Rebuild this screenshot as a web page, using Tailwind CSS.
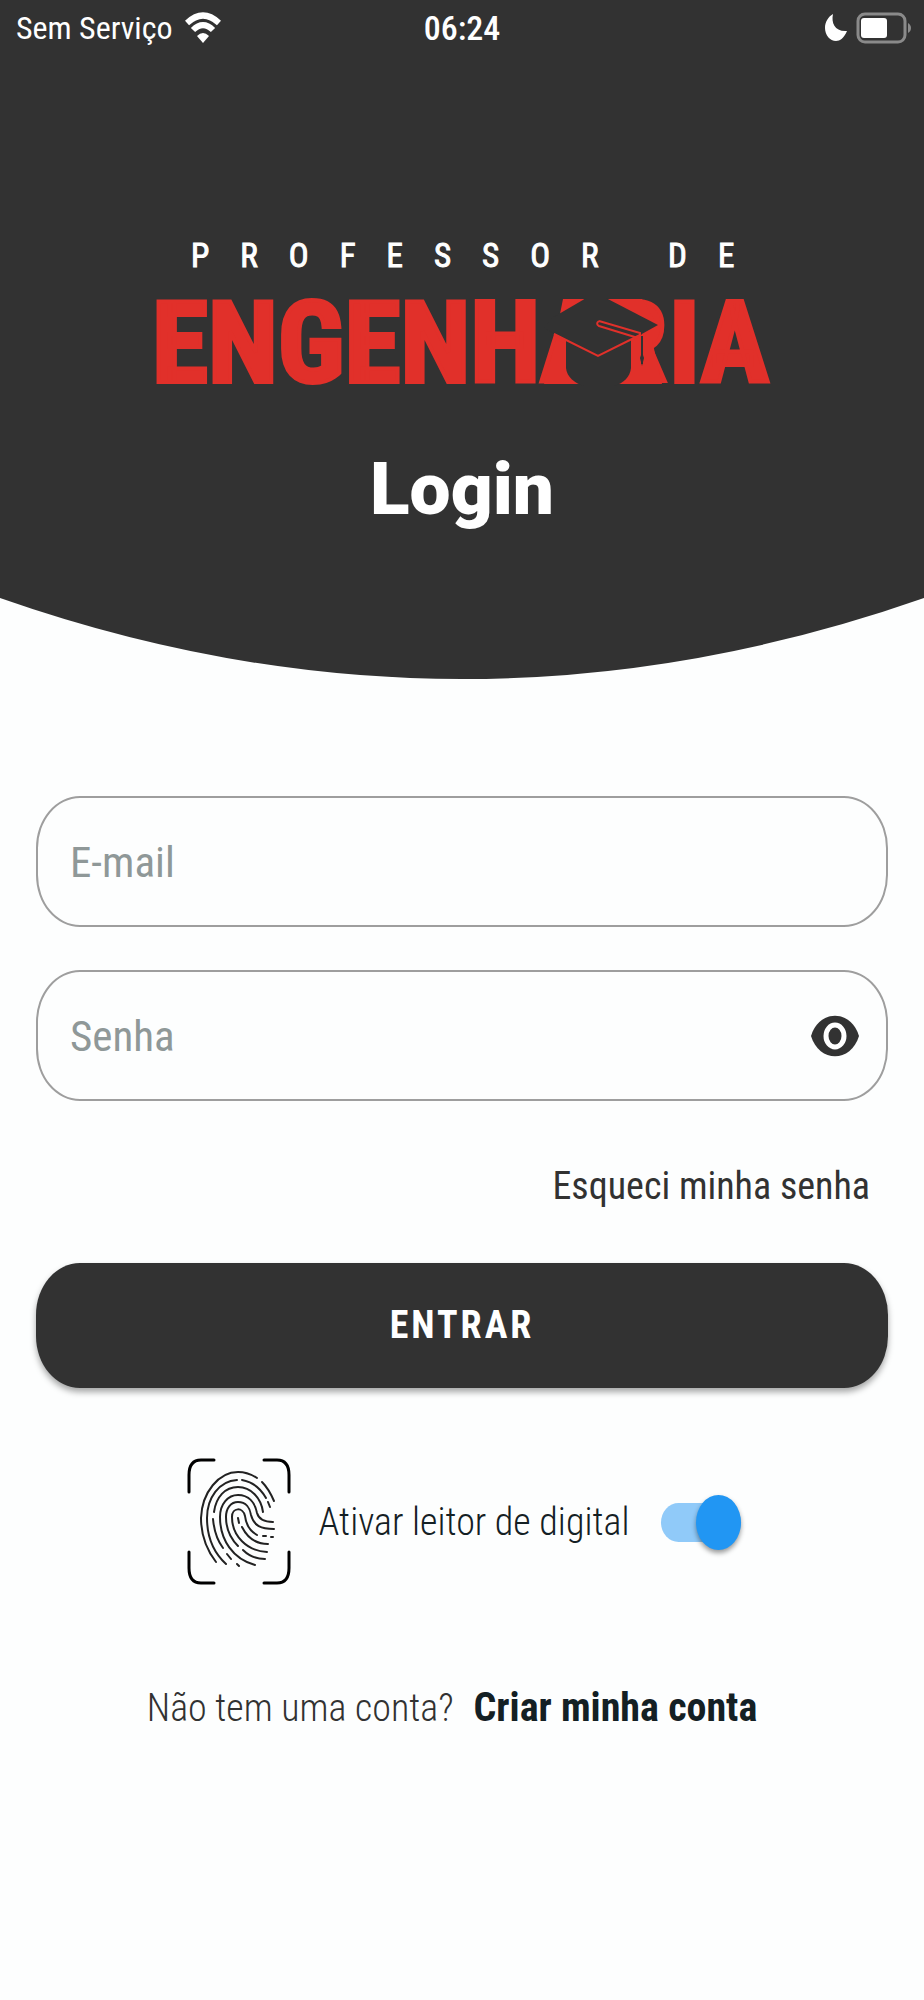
<!DOCTYPE html>
<html lang="pt-BR">
<head>
    <meta charset="UTF-8">
    <meta name="viewport" content="width=device-width, initial-scale=1.0">
    <title>Login</title>
    <script src="https://cdn.jsdelivr.net/npm/@tailwindcss/browser@4"></script>
</head>
<body class="min-h-screen bg-[#fdfefe] text-[#323232] font-['Roboto_Condensed','Roboto',sans-serif]">

    <header>
        <div class="bg-[#323232] text-white">
            <!-- Status bar -->
            <div class="grid grid-cols-3 items-center h-14 px-4 text-[32px] leading-none">
                <div class="flex items-center gap-3 whitespace-nowrap">
                    <span>Sem Serviço</span>
                    <svg class="w-9 h-8 shrink-0" viewBox="0 0 36 32" fill="none" stroke="white">
                        <path d="M2 11Q18 -4 34 11" stroke-width="6"/>
                        <path d="M8 18Q18 8 28 18" stroke-width="6"/>
                        <path d="M12 24Q18 18 24 24L18 31Z" fill="white" stroke="none"/>
                    </svg>
                </div>
                <span class="text-center text-[34px] font-medium">06:24</span>
                <div class="flex items-center justify-end gap-2">
                    <svg class="w-6 h-8" viewBox="0 0 24 32" fill="white">
                        <path d="M9 2C7 11 11 20 23 19C20 26 16 29 12 29C6 29 1 23 1 16C1 10 4 5 9 2Z"/>
                    </svg>
                    <svg class="w-14 h-8 -mr-1" viewBox="0 0 56 32" fill="none">
                        <rect x="2" y="2" width="47" height="28" rx="7" stroke="#8a8a8a" stroke-width="3"/>
                        <rect x="5" y="6" width="26" height="20" rx="3" fill="white"/>
                        <path d="M52 11C56 13 56 19 52 21Z" fill="#8a8a8a"/>
                    </svg>
                </div>
            </div>

            <!-- Logo -->
            <div class="flex justify-center pt-44">
                <svg class="w-[616px] h-40 overflow-visible" viewBox="0 0 616 160" role="img" aria-label="Professor de Engenharia">
                    <text x="37" y="35" fill="white" font-size="33" letter-spacing="31" stroke="white" stroke-width="1">PROFESSOR DE</text>
                    <g fill="#e1302a" stroke="#e1302a" stroke-width="4" font-size="114" font-weight="bold">
                        <text y="150" x="-2">ENGENH</text>
                        <text y="150" x="386">A</text>
                        <text y="150" x="450">R</text>
                        <text y="150" x="515">IA</text>
                    </g>
                    <!-- Graduation cap between A and R -->
                    <g transform="translate(376 48)">
                        <path d="M33 19H55L30 34ZM71 19H112L128 46L100 60ZM26 60L60 70V104H14ZM84 104V60H122L132 104Z" fill="#e1302a"/>
                        <path d="M36 50V88C37 97 44 103 54 106H84C94 103 100 97 101 88V50Z" fill="#323232"/>
                        <path d="M14 48L22 38L58 17L66 13L74 17L128 45L110 55L68 76Z" fill="#323232"/>
                        <g fill="none" stroke="#e1302a" stroke-width="2">
                            <path d="M24 54L68 76L110 55"/>
                            <path d="M69 41L110 53V60M69 41C66 43 67 45 69 46L108 58"/>
                        </g>
                        <path d="M112 56V84" stroke="#323232" stroke-width="2"/>
                        <path d="M112 72L114 78L112 86L110 78Z" fill="#323232"/>
                    </g>
                </svg>
            </div>

            <h1 class="pt-[47px] text-center text-[73px] leading-[100px] font-['Roboto',sans-serif] font-black">Login</h1>
            <div class="h-[59px]"></div>
        </div>
        <svg class="block w-full h-[81px]" viewBox="0 0 100 100" preserveAspectRatio="none">
            <path d="M0 0Q50 200 100 0Z" fill="#323232"/>
        </svg>
    </header>

    <main class="px-9 pt-[117px] pb-16">
        <form>
            <input class="block w-full h-[131px] px-8 border-2 border-[#9e9e9e] rounded-[44px/52px] text-[43px] placeholder:text-[#8f9898]" type="email" placeholder="E-mail" aria-label="E-mail" id="email">

            <div class="relative mt-[43px]">
                <input class="block w-full h-[131px] pl-8 pr-28 border-2 border-[#9e9e9e] rounded-[44px/52px] text-[43px] placeholder:text-[#8f9898]" type="password" placeholder="Senha" aria-label="Senha" id="password">
                <button class="absolute inset-y-0 right-7 flex items-center" type="button" aria-label="Mostrar senha" id="toggle">
                    <svg class="w-[50px] h-[42px]" viewBox="0 0 50 42">
                        <path d="M1 21C9 -6 41 -6 49 21C41 48 9 48 1 21Z" fill="#323232"/>
                        <ellipse cx="25" cy="21" rx="9" ry="11" fill="#323232" stroke="white" stroke-width="5"/>
                    </svg>
                </button>
            </div>

            <div class="flex justify-end pt-[60px] pr-[18px]">
                <a class="text-[38px] leading-[50px]" href="#">Esqueci minha senha</a>
            </div>

            <button class="block w-full h-[125px] mt-[52px] rounded-[44px/52px] bg-[#323232] text-white text-[38px] font-bold tracking-[3px] shadow-[0_4px_6px_rgba(0,0,0,0.35)]" type="submit">ENTRAR</button>

            <div class="flex items-center justify-center pt-[70px] pl-1">
                <svg class="w-[104px] h-[128px]" viewBox="0 0 104 128" fill="none" stroke="black" stroke-linecap="round">
                    <path d="M2 34V17Q2 2 14 2H27M77 2H90Q102 2 102 17V34M2 94V110Q2 125 14 125H27M77 125H90Q102 125 102 110V94" stroke-width="3"/>
                    <g stroke="#222222" stroke-width="2">
                        <path d="M29 104C19 91 14 76 14 60C15 34 32 14 51 14C58 14 64 16 70 20"/>
                        <path d="M75 24C80 29 84 36 87 43"/>
                        <path d="M39 106C26 94 20 78 20 60C20 40 32 23 50 22"/>
                        <path d="M55 22C66 24 74 31 79 40M81 44L83 49"/>
                        <path d="M27 54C29 39 38 29 51 29C64 29 74 40 76 54"/>
                        <path d="M26 61C27 72 30 82 36 90M40 96L44 101M50 106L52 108"/>
                        <path d="M68 107C46 101 33 82 33 59C33 46 41 37 51 37C62 37 68 45 70 55C72 62 78 64 86 64"/>
                        <path d="M51 88C43 80 39 70 39 59C39 50 44 44 51 44C59 44 63 50 64 57C67 68 74 71 87 71"/>
                        <path d="M56 92C62 98 70 101 78 101"/>
                        <path d="M80 94C60 93 45 78 45 59C45 49 56 49 58 58C59 67 63 73 70 77"/>
                        <path d="M51 60L52 65M55 69C60 79 69 86 81 86M76 78H79M84 79H86"/>
                    </g>
                </svg>
                <label class="ml-7 text-[38px] leading-[50px] font-light text-[#142024]" for="digital">Ativar leitor de digital</label>
                <input class="appearance-none relative ml-8 w-[80px] h-[39px] rounded-[18px/20px] bg-[#90caf9] before:absolute before:-top-2 before:right-0 before:w-[45px] before:h-[55px] before:rounded-[50%] before:bg-[#2196f3] before:shadow-[0_3px_5px_rgba(0,0,0,0.4)]" type="checkbox" id="digital" checked>
            </div>
        </form>

        <p class="flex items-baseline justify-center gap-5 pt-[97px] pr-5 text-[38px] leading-[50px]">
            <span class="font-light">Não tem uma conta?</span>
            <a class="text-[40px] font-bold text-[#142024]" href="#">Criar minha conta</a>
        </p>
    </main>

    <script>
        const password = document.querySelector('#password');
        const toggle = document.querySelector('#toggle');

        toggle.addEventListener('click', () => {
            password.type = password.type === 'password' ? 'text' : 'password';
        })
    </script>
</body>
</html>
